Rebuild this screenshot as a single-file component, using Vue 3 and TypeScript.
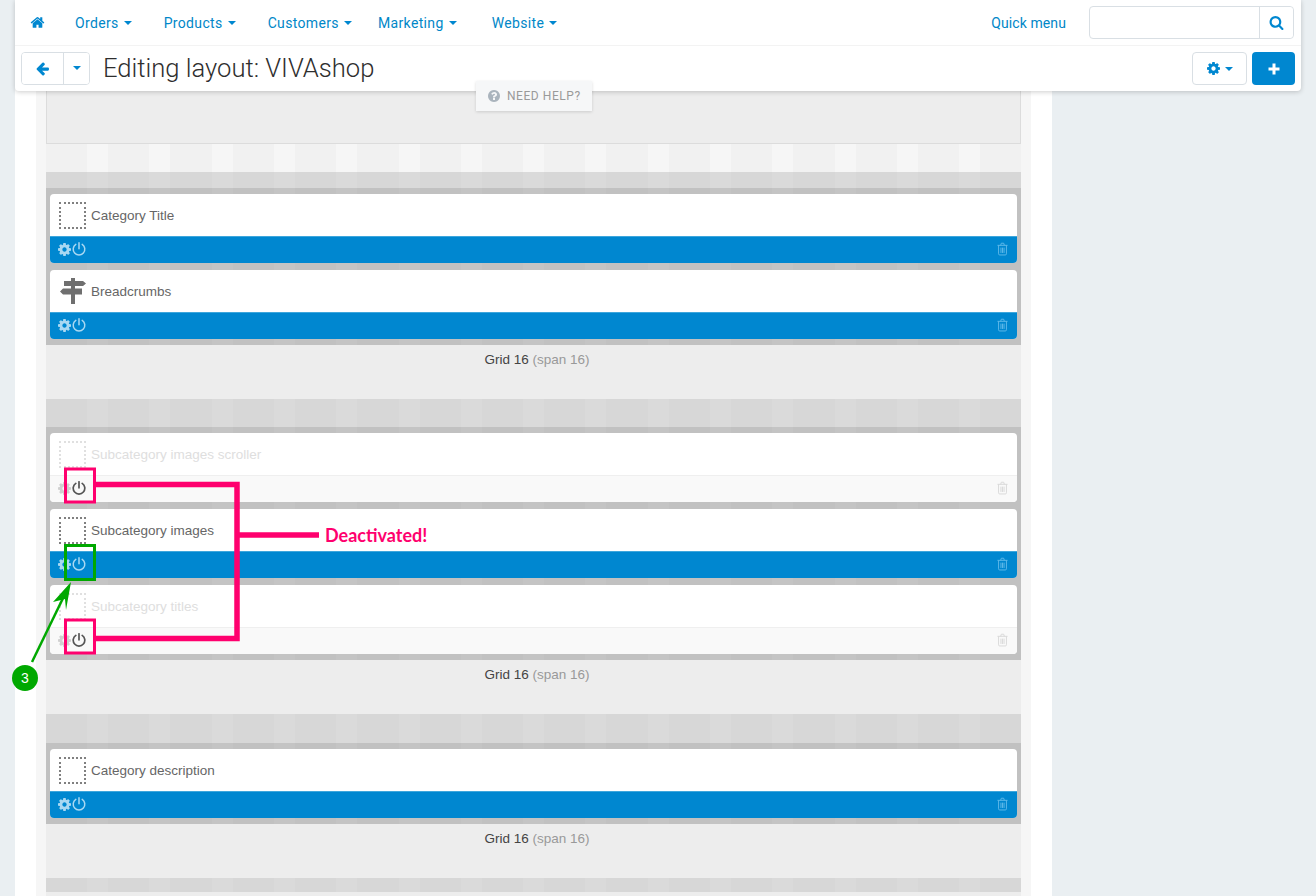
<script setup lang="ts">
const gear = "M1152 896q0-106-75-181t-181-75-181 75-75 181 75 181 181 75 181-75 75-181zm512-109v222q0 12-8 23t-20 13l-185 28q-19 54-39 91 35 50 107 138 10 12 10 25t-9 23q-27 37-99 108t-94 71q-12 0-26-9l-138-108q-44 23-91 38-16 136-29 186-7 28-36 28h-222q-14 0-24.500-8.500t-11.500-21.500l-28-184q-49-16-90-37l-141 107q-10 9-25 9-14 0-25-11-126-114-165-168-7-10-7-23 0-12 8-23 15-21 51-66.500t54-70.500q-27-50-41-99l-183-27q-13-2-21-12.500t-8-23.500v-222q0-12 8-23t19-13l186-28q14-46 39-92-40-57-107-138-10-12-10-24 0-10 9-23 26-36 98.500-107.500t94.500-71.500q13 0 26 10l138 107q44-23 91-38 16-136 29-186 7-28 36-28h222q14 0 24.500 8.500t11.500 21.500l28 184q49 16 90 37l142-107q9-9 24-9 13 0 25 10 129 119 165 170 7 8 7 22 0 12-8 23-15 21-51 66.500t-54 70.500q26 50 41 98l183 28q13 2 21 12.500t8 23.500z"
const home = "M1472 992v480q0 26-19 45t-45 19h-384v-384h-256v384h-384q-26 0-45-19t-19-45v-480q0-1 .5-3t.5-3l575-474 575 474q1 2 1 6zm223-69l-62 74q-8 9-21 11h-3q-13 0-21-7l-692-577-692 577q-12 8-24 7-13-2-21-11l-62-74q-8-10-7-23.500t11-21.500l719-599q32-26 76-26t76 26l244 204v-195q0-14 9-23t23-9h192q14 0 23 9t9 23v408l219 182q10 8 11 21.500t-7 23.500z"
const search = "M1216 832q0-185-131.500-316.500t-316.500-131.500-316.500 131.500-131.500 316.500 131.500 316.500 316.500 131.500 316.500-131.500 131.500-316.500zm512 832q0 52-38 90t-90 38q-54 0-90-38l-343-342q-179 124-399 124-143 0-273.500-55.500t-225-150-150-225-55.500-273.500 55.500-273.500 150-225 225-150 273.500-55.500 273.500 55.500 225 150 150 225 55.500 273.500q0 220-124 399l343 343q37 37 37 90z"
const arrowLeft = "M1664 896v128q0 53-32.500 90.500t-84.500 37.500h-704l293 294q38 36 38 90t-38 90l-75 76q-37 37-90 37-52 0-91-37l-651-652q-37-37-37-90 0-52 37-91l651-650q38-38 91-38 52 0 90 38l75 74q38 38 38 91t-38 91l-293 293h704q52 0 84.500 37.500t32.500 90.500z"
const question = "M1024 1376v-192q0-14-9-23t-23-9h-192q-14 0-23 9t-9 23v192q0 14 9 23t23 9h192q14 0 23-9t9-23zm256-672q0-88-55.500-163t-138.500-116-170-41q-243 0-371 213-15 24 8 42l132 100q7 6 19 6 16 0 25-12 53-68 86-92 34-24 86-24 48 0 85.500 26t37.500 59q0 38-20 61t-68 45q-63 28-115.500 86.500t-52.500 125.500v36q0 14 9 23t23 9h192q14 0 23-9t9-23q0-19 21.500-49.500t54.500-49.500q32-18 49-28.500t46-35 44.500-48 28-60.500 12.500-81zm384 192q0 209-103 385.500t-279.500 279.500-385.500 103-385.500-103-279.500-279.500-103-385.500 103-385.500 279.500-279.500 385.500-103 385.500 103 279.500 279.500 103 385.500z"

interface Block { title: string; off?: boolean; icon?: string }
interface Section { head: number; blocks: Block[] }

const sections: Section[] = [
  { head: 16, blocks: [{ title: 'Category Title' }, { title: 'Breadcrumbs', icon: 'sign' }] },
  { head: 28, blocks: [
    { title: 'Subcategory images scroller', off: true },
    { title: 'Subcategory images' },
    { title: 'Subcategory titles', off: true },
  ] },
  { head: 29, blocks: [{ title: 'Category description' }] },
]
const menu = ['Orders', 'Products', 'Customers', 'Marketing', 'Website']
</script>

<template>
  <div class="screen">
    <main class="page">
      <div class="gutter">
        <div class="canvas">
          <div class="top-grid"></div>
          <div class="spacer stripes-light"></div>
          <section v-for="s in sections" :key="s.blocks[0].title">
            <div class="head stripes-mid" :style="{ height: s.head + 'px' }"></div>
            <div class="blocks stripes-dark">
              <article v-for="b in s.blocks" :key="b.title" class="block" :class="{ off: b.off }">
                <div class="block-body">
                  <svg v-if="b.icon === 'sign'" class="thumb" viewBox="0 0 28 28">
                    <path class="sign" d="M12 1h4v3h8l3 2.500L24 9h-8v2.500h7v6h-7V27h-4v-9.500H4l-3-3 3-3h8V9H5V4h7z" />
                  </svg>
                  <span v-else class="dots"></span>
                  <span class="block-title">{{ b.title }}</span>
                </div>
                <div class="block-foot">
                  <svg class="ic-gear" viewBox="128 128 1536 1536"><path :d="gear" /></svg>
                  <svg class="ic-power" viewBox="0 0 14 14"><path d="M3.800 2.400a5.800 5.800 0 1 0 6.400 0M7 .8v6" /></svg>
                  <svg class="ic-trash" viewBox="0 0 12 14"><path d="M.5 3h11M1.700 3v9.200q0 1.300 1.300 1.300h6q1.300 0 1.300-1.300V3M4 3l.7-2.300h2.600L8 3M4.300 5.500v5.800M6 5.500v5.800M7.700 5.500v5.800" /></svg>
                </div>
              </article>
            </div>
            <div class="grid-label">Grid 16 <span>(span 16)</span></div>
          </section>
          <div class="head stripes-mid tail"></div>
        </div>
      </div>
    </main>

    <header class="topbar">
      <nav class="nav">
        <svg class="home" viewBox="0 0 1792 1792"><path :d="home" /></svg>
        <ul class="menu">
          <li v-for="m in menu" :key="m">{{ m }}<i class="caret"></i></li>
        </ul>
        <a class="quick">Quick menu</a>
        <div class="search">
          <span class="search-input"></span>
          <button class="search-btn"><svg viewBox="0 0 1792 1792"><path :d="search" /></svg></button>
        </div>
      </nav>
      <div class="titlebar">
        <div class="back-group">
          <button class="back"><svg viewBox="0 0 1792 1792"><path :d="arrowLeft" /></svg></button>
          <button class="back-more"><i class="caret"></i></button>
        </div>
        <h1>Editing layout: VIVAshop</h1>
        <button class="settings"><svg viewBox="128 128 1536 1536"><path :d="gear" /></svg><i class="caret"></i></button>
        <button class="add"><svg viewBox="0 0 12 12"><path d="M6 .5v11M.5 6h11" /></svg></button>
      </div>
    </header>

    <div class="help">
      <svg viewBox="128 128 1536 1536"><path :d="question" /></svg>
      <span>NEED HELP?</span>
    </div>

    <svg class="marks" viewBox="0 0 1316 896">
      <g class="pink">
        <rect x="65.500" y="469" width="29" height="33" />
        <rect x="65.500" y="620" width="29" height="33" />
        <path class="thick" d="M95 484.500h142V638.500H95M237 535h82" />
      </g>
      <rect class="green-box" x="65.500" y="545.500" width="29" height="34" />
      <path class="arrow-line" d="M32 662 66 592" />
      <path class="arrow-head" d="M71 582 53 602 65 599 66 610z" />
      <circle class="badge" cx="25" cy="678" r="13" />
    </svg>
    <span class="badge-text">3</span>
    <span class="callout">Deactivated!</span>
  </div>
</template>

<style>
html, body { margin: 0; background: #eaeff2; overflow: hidden; }
</style>

<style scoped>
.screen {
  position: relative;
  width: 1316px;
  height: 896px;
  overflow: hidden;
  background: #eaeff2;
  font-family: "Liberation Sans", Arial, sans-serif;
}
button { padding: 0; margin: 0; cursor: pointer; }

.page { width: 1037px; height: 896px; margin-left: 15px; padding: 0 21px; box-sizing: border-box; background: #fff; }
.gutter { height: 100%; padding: 0 10px; background: #f6f6f6; }
.canvas { height: 100%; overflow: hidden; background: #ededed; }
.top-grid { height: 143px; background: #ededed; border: 1px solid #dcdcdc; border-top: 0; }
.spacer { height: 28px; }

.stripes-light { background: repeating-linear-gradient(90deg, #f1f1f1 0 41px, #f6f6f6 41px 62px, #f1f1f1 62px 62.300px); }
.stripes-mid { background: repeating-linear-gradient(90deg, #d7d7d7 0 41px, #dadada 41px 62px, #d7d7d7 62px 62.300px); }
.stripes-dark { background: repeating-linear-gradient(90deg, #c1c1c1 0 41px, #c4c4c4 41px 62px, #c1c1c1 62px 62.300px); }

.blocks { display: flex; flex-direction: column; gap: 7px; padding: 6px 4px; }
.block { height: 69px; display: flex; flex-direction: column; border-radius: 4px; overflow: hidden; background: #fff; }
.block-body { height: 42px; display: flex; align-items: center; padding-left: 9px; gap: 5px; }
.dots { width: 27px; height: 27px; box-sizing: border-box; border: 2px dotted #808080; }
.thumb { width: 28px; height: 28px; margin: 0 -1px 0 0; }
.sign { fill: #6f6f6f; }
.block-title { font-size: 13.500px; color: #666; }

.block-foot { flex: 1; display: flex; align-items: center; padding: 0 9px 2px 8px; background: #0087d0; border-top: 1px solid #3ea6dc; }
.ic-gear { width: 13px; height: 13px; fill: #a9d8f2; }
.ic-power { width: 14px; height: 14px; margin-left: .5px; fill: none; stroke: #a9d8f2; stroke-width: 1.500; stroke-linecap: round; }
.ic-trash { width: 11px; height: 14px; margin-left: auto; fill: none; stroke: #62bbea; stroke-width: 1; }

.block.off .dots { border-color: #e0e0e0; }
.block.off .block-title { color: #dedede; }
.block.off .block-foot { background: #f9f9f9; border-top-color: #efefef; }
.block.off .ic-gear { fill: #d0d0d0; }
.block.off .ic-power { stroke: #555; stroke-width: 1.700; }
.block.off .ic-trash { stroke: #d8d8d8; }

.grid-label { height: 54px; box-sizing: border-box; padding: 7px 0 0 7px; background: #ededed; font-size: 13.500px; line-height: 16px; text-align: center; color: #444; }
.grid-label span { color: #999; }
.tail { height: 14px; }

.topbar {
  position: absolute; left: 15px; top: 0; width: 1286px; height: 91px;
  background: #fff; border-radius: 0 0 4px 4px;
  box-shadow: 0 1px 5px rgba(0, 0, 0, .2);
}
.nav { height: 46px; display: flex; align-items: center; border-bottom: 1px solid #f3f3f3; box-sizing: border-box; font-family: Roboto, sans-serif; }
.home { width: 15px; height: 15px; margin-left: 15px; fill: #0087d0; }
.menu { display: flex; margin: 0 0 0 30px; padding: 0; list-style: none; font-size: 14px; color: #0087c8; letter-spacing: .35px; }
.menu li { margin-right: 32px; display: flex; align-items: center; white-space: nowrap; }
.menu li:nth-child(3) { margin-right: 26px; }
.menu li:nth-child(4) { margin-right: 35px; }
.caret { display: inline-block; width: 0; height: 0; margin-left: 5px; border: 4px solid transparent; border-top-color: #0087d0; border-bottom: 0; }
.quick { margin-left: auto; font-size: 14px; color: #0087c8; letter-spacing: .1px; }
.search { display: flex; width: 205px; height: 33px; margin: 0 7px 0 23px; box-sizing: border-box; border: 1px solid #d9dfe4; border-radius: 4px; }
.search-input { flex: 1; }
.search-btn { width: 34px; border: 0; border-left: 1px solid #d9dfe4; background: #fff; display: flex; align-items: center; justify-content: center; border-radius: 0 4px 4px 0; }
.search-btn svg { width: 15px; height: 15px; fill: #0087d0; }

.titlebar { height: 45px; display: flex; align-items: center; padding: 0 6px; position: relative; }
.back-group { display: flex; height: 33px; margin-top: -1px; box-sizing: border-box; border: 1px solid #d9dfe4; border-radius: 4px; overflow: hidden; }
.back-group button { border: 0; background: #fff; display: flex; align-items: center; justify-content: center; }
.back { width: 41px; }
.back svg { width: 15px; height: 15px; fill: #0087d0; }
.back-more { width: 26px; border-left: 1px solid #d9dfe4 !important; }
.back-more .caret { margin: 0; }
h1 { flex: 1; margin: -2px 0 0 13px; font: 300 25.600px/34px Roboto, sans-serif; color: #2e2e2e; }
.settings { width: 55px; height: 33px; display: flex; align-items: center; justify-content: center; background: #fff; border: 1px solid #d9dfe4; border-radius: 4px; }
.settings svg { width: 13px; height: 13px; fill: #0087d0; }
.add { width: 43px; height: 33px; margin-left: 5px; display: flex; align-items: center; justify-content: center; background: #0087d0; border: 0; border-radius: 4px; }
.add svg { width: 12px; height: 12px; fill: none; stroke: #fff; stroke-width: 3; }

.help {
  position: absolute; left: 476px; top: 81px; width: 116px; height: 30px;
  display: flex; align-items: center; box-sizing: border-box; padding-left: 12px; gap: 7px;
  background: #f6f7f8; box-shadow: 0 1px 3px rgba(0, 0, 0, .14);
  font: 12px Roboto, sans-serif; color: #9a9a9a; letter-spacing: .55px;
}
.help svg { width: 12px; height: 12px; fill: #aab4bd; }

.marks { position: absolute; left: 0; top: 0; width: 1316px; height: 896px; pointer-events: none; }
.pink { fill: none; stroke: #ff006e; stroke-width: 3; }
.thick { stroke-width: 5.500; }
.green-box { fill: none; stroke: #00a800; stroke-width: 3; }
.arrow-line { stroke: #00a800; stroke-width: 2.500; fill: none; }
.arrow-head { fill: #00a800; }
.badge { fill: #00a800; }
.badge-text { position: absolute; left: 12px; top: 669px; width: 26px; text-align: center; font-size: 14px; line-height: 18px; color: #fff; }
.callout { position: absolute; left: 325px; top: 523px; font: 700 18px/24px Lato, sans-serif; color: #ff006e; white-space: nowrap; }
</style>
